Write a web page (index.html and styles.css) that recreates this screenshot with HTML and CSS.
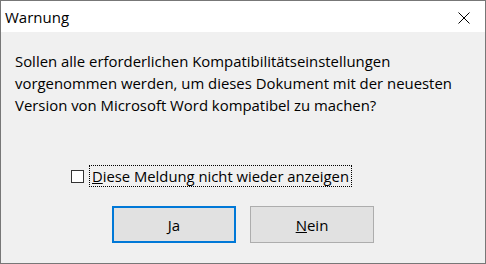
FILE: index.html
```html
<html>
    <head>
        <meta charset="UTF-8">
        <title>Warnung</title>
        <link rel="stylesheet" href="styles.css">
    </head>
    <body>
        <div class="dialog">
            <div class="titlebar">
                <span class="title">Warnung</span>
                <span class="close">
                    <svg width="12" height="12" viewBox="0 0 12 12"><path d="M0.5 0.5 L11.5 11.5 M11.5 0.5 L0.5 11.5" stroke="#000" stroke-width="1" fill="none"/></svg>
                </span>
            </div>
            <div class="content">
                <p class="message">Sollen alle erforderlichen Kompatibilitätseinstellungen<br/>vorgenommen werden, um dieses Dokument mit der neuesten<br/>Version von Microsoft Word kompatibel zu machen?</p>
                <div class="check-row">
                    <span class="checkbox"></span>
                    <span class="check-label"><u>D</u>iese Meldung nicht wieder anzeigen</span>
                </div>
                <div class="buttons">
                    <button class="btn default"><u>J</u>a</button>
                    <button class="btn"><u>N</u>ein</button>
                </div>
            </div>
        </div>
    </body>
</html>
```
FILE: styles.css
```css
* {
    box-sizing: border-box;
}
body {
    margin: 0;
    font-family: "Open Sans", "Noto Sans", sans-serif;
    font-size: 15px;
    color: #000;
}
.dialog {
    width: 486px;
    height: 264px;
    border: 1px solid #777;
    display: flex;
    flex-direction: column;
    background: #f0f0f0;
}
.titlebar {
    height: 31px;
    background: #fff;
    display: flex;
    align-items: center;
    justify-content: space-between;
    padding-left: 4px;
    padding-right: 15px;
}
.title {
    font-size: 15px;
}
.close {
    display: flex;
    padding-top: 3px;
}
.content {
    flex: 1;
    display: flex;
    flex-direction: column;
}
.message {
    margin: 18px 0 0 14px;
    line-height: 22px;
    font-size: 14.9px;
}
.check-row {
    display: flex;
    align-items: center;
    margin-top: 49px;
    padding-left: 70px;
}
.checkbox {
    width: 13px;
    height: 13px;
    border: 1px solid #333;
    background: #fff;
    margin-right: 5px;
}
.check-label {
    border: 1px dotted #000;
    padding: 0 2px;
    line-height: 20px;
    font-size: 14.8px;
}
.buttons {
    display: flex;
    justify-content: center;
    gap: 14px;
    margin-top: 19px;
}
.btn {
    width: 124px;
    height: 37px;
    background: #e1e1e1;
    border: 1px solid #adadad;
    font-family: inherit;
    font-size: 15px;
    padding: 0;
    color: #000;
}
.btn.default {
    border: 2px solid #0078d7;
}
```
